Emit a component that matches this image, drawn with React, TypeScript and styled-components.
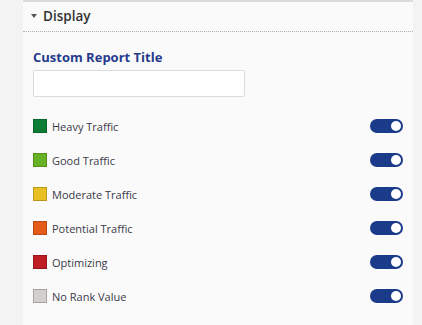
import styled, { createGlobalStyle } from 'styled-components';

const GlobalStyle = createGlobalStyle`
  body {
    margin: 0;
    background: #f3f3f3;
    font-family: 'Open Sans', 'Noto Sans', sans-serif;
  }
`;

const items = [
  { label: 'Heavy Traffic', color: '#0b7d34' },
  { label: 'Good Traffic', color: '#6bb124' },
  { label: 'Moderate Traffic', color: '#e9bf26' },
  { label: 'Potential Traffic', color: '#e45c18' },
  { label: 'Optimizing', color: '#bd1f24' },
  { label: 'No Rank Value', color: '#d3cfce' },
];

export default function App() {
  return (
    <>
      <GlobalStyle />
      <Page>
        <Panel>
          <Header>
            <Caret />
            <span>Display</span>
          </Header>
          <Body>
            <Label>Custom Report Title</Label>
            <TextInput type="text" />
            <List>
              {items.map((item) => (
                <Row key={item.label}>
                  <Swatch $color={item.color} />
                  <RowLabel>{item.label}</RowLabel>
                  <Toggle>
                    <Thumb />
                  </Toggle>
                </Row>
              ))}
            </List>
          </Body>
        </Panel>
      </Page>
    </>
  );
}

const Page = styled.div`
  height: 325px;
  padding-left: 23px;
  box-sizing: border-box;
`;

const Panel = styled.section`
  width: 390px;
  height: 100%;
  background: #fafafa;
  border-top: 2px solid #dcdcdc;
  box-sizing: border-box;
`;

const Header = styled.div`
  display: flex;
  align-items: center;
  height: 28px;
  padding-left: 8px;
  padding-bottom: 1px;
  border-bottom: 1px dotted #b0b0b0;
  font-size: 13.5px;
  font-weight: 600;
  color: #333;

  span {
    margin-left: 6px;
  }
`;

const Caret = styled.i`
  width: 0;
  height: 0;
  border-left: 3.5px solid transparent;
  border-right: 3.5px solid transparent;
  border-top: 4px solid #555;
`;

const Body = styled.div`
  padding: 16px 10px 0 10px;
`;

const Label = styled.div`
  font-size: 13px;
  font-weight: 700;
  color: #263a8c;
  line-height: 18px;
`;

const TextInput = styled.input`
  display: block;
  margin-top: 4px;
  width: 212px;
  height: 27px;
  box-sizing: border-box;
  border: 1px solid #dcdcdc;
  border-radius: 2px;
  background: #fff;
  outline: none;
`;

const List = styled.div`
  margin-top: 22px;
  display: flex;
  flex-direction: column;
  gap: 20px;
`;

const Row = styled.div`
  display: flex;
  align-items: center;
  height: 14px;
`;

const Swatch = styled.span<{ $color: string }>`
  width: 14px;
  height: 14px;
  box-sizing: border-box;
  background: ${(p) => p.$color};
  border: 1px solid rgba(0, 0, 0, 0.2);
`;

const RowLabel = styled.span`
  margin-left: 5px;
  font-size: 11px;
  color: #3a3a4a;
  flex: 1;
`;

const Toggle = styled.span`
  width: 33px;
  height: 14px;
  border-radius: 7px;
  background: #193b89;
  display: flex;
  align-items: center;
  justify-content: flex-end;
  padding-right: 2px;
  box-sizing: border-box;
`;

const Thumb = styled.span`
  width: 10px;
  height: 10px;
  border-radius: 50%;
  background: #fff;
`;
